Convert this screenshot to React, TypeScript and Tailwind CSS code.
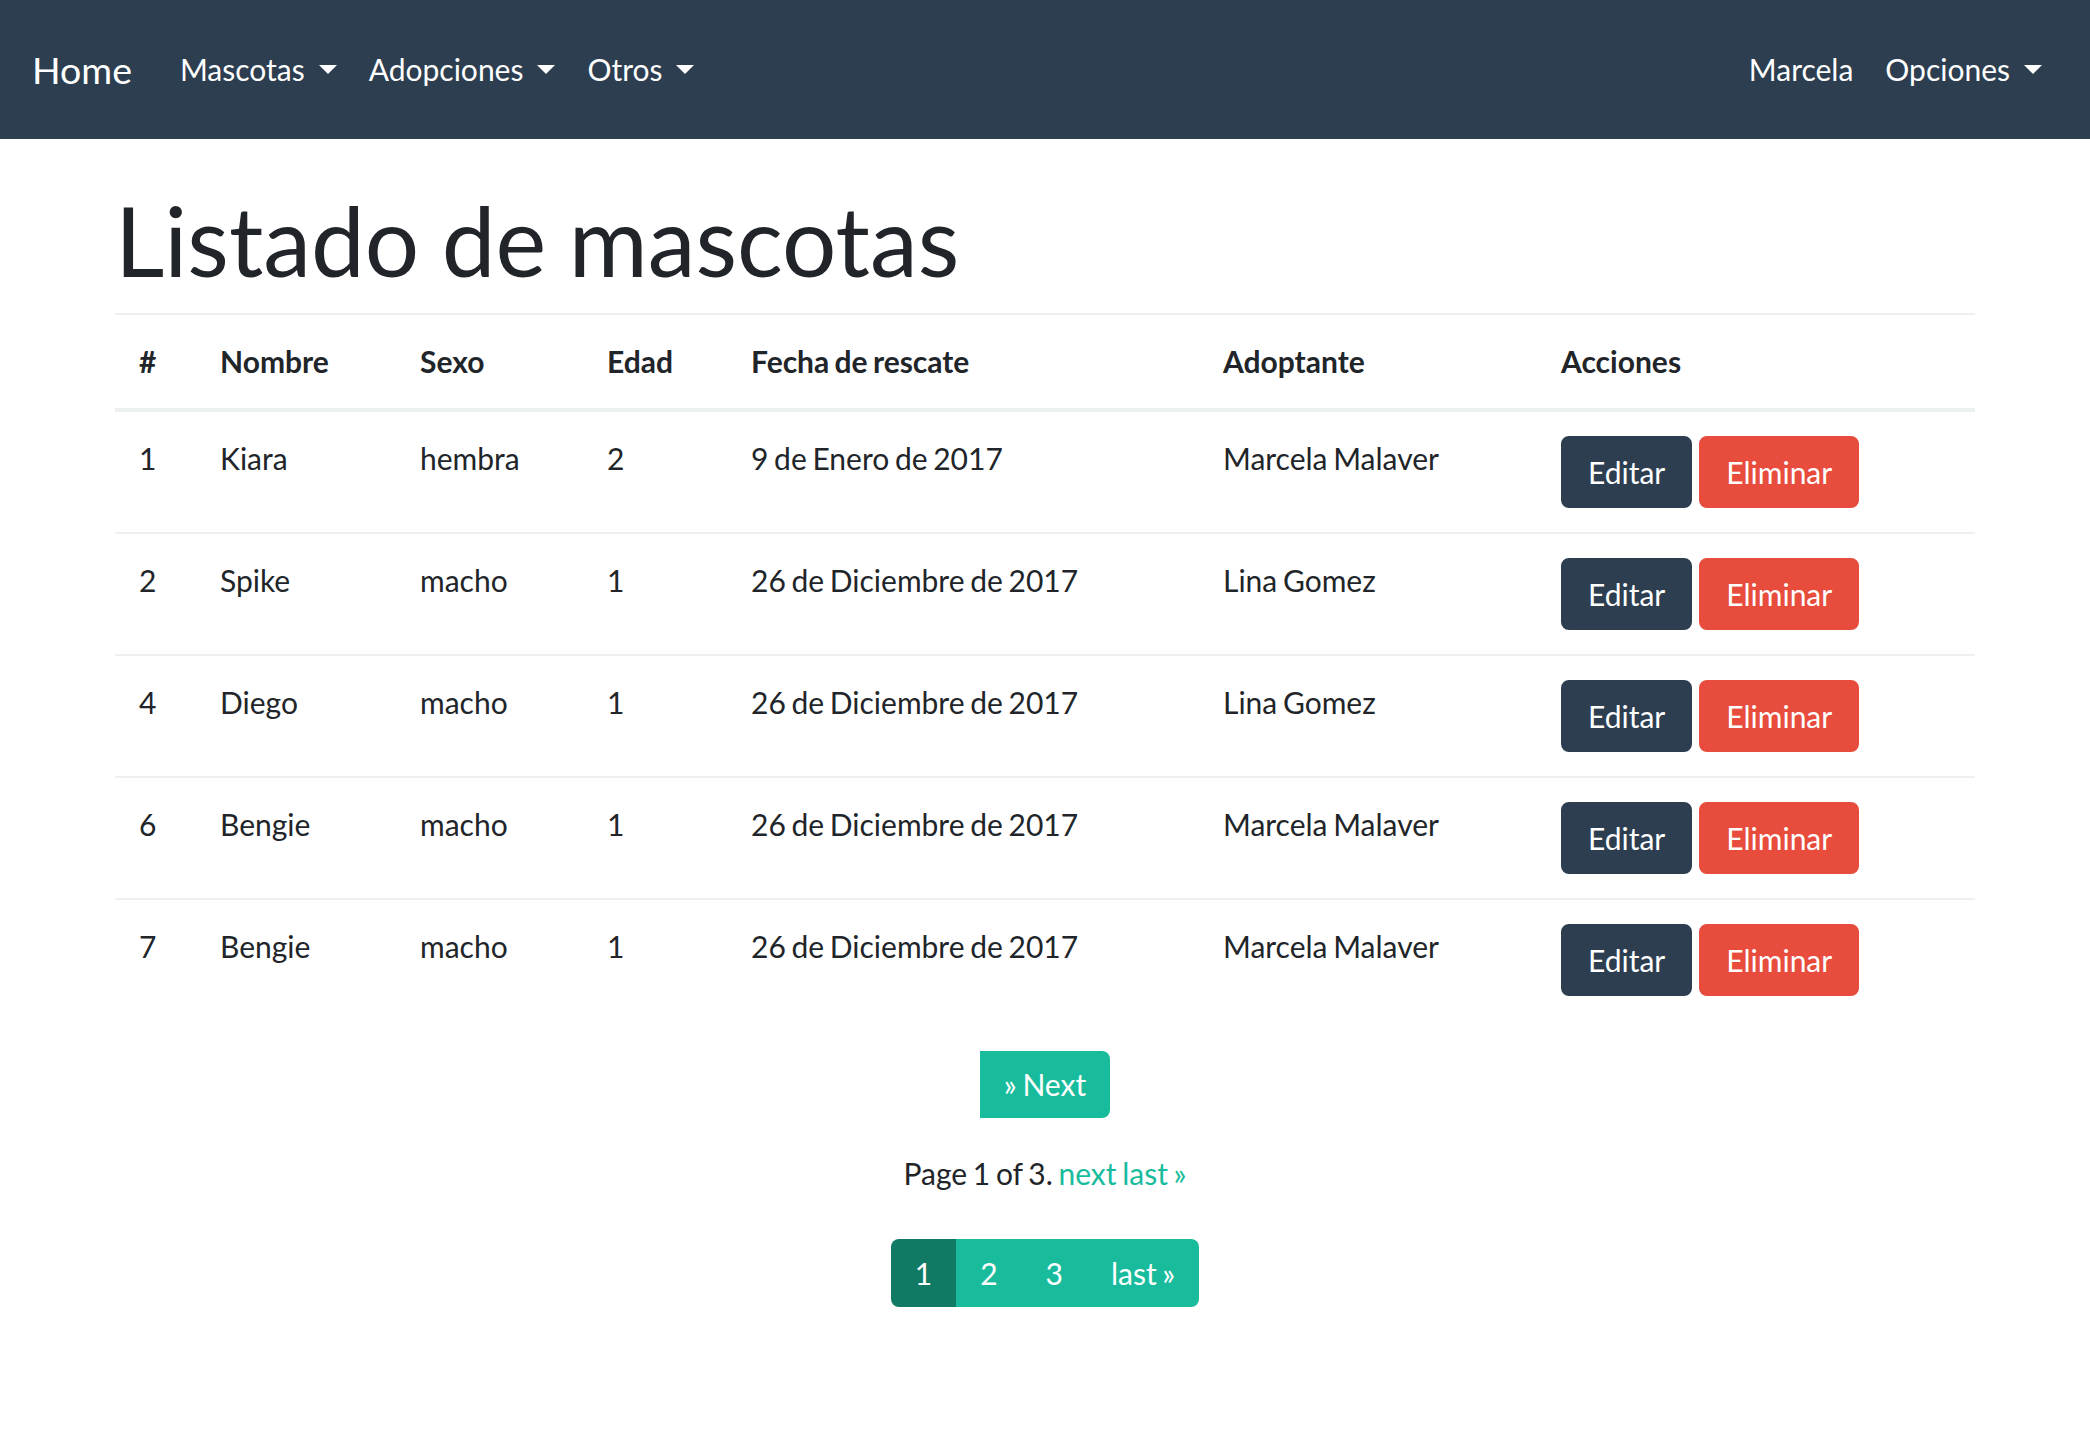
import React from 'react'

// Listado de mascotas — Bootstrap "Flatly"-style page rendered at 2x scale

type Mascota = {
  id: number
  nombre: string
  sexo: string
  edad: number
  fecha: string
  adoptante: string
}

const MASCOTAS: Mascota[] = [
  { id: 1, nombre: 'Kiara', sexo: 'hembra', edad: 2, fecha: '9 de Enero de 2017', adoptante: 'Marcela Malaver' },
  { id: 2, nombre: 'Spike', sexo: 'macho', edad: 1, fecha: '26 de Diciembre de 2017', adoptante: 'Lina Gomez' },
  { id: 4, nombre: 'Diego', sexo: 'macho', edad: 1, fecha: '26 de Diciembre de 2017', adoptante: 'Lina Gomez' },
  { id: 6, nombre: 'Bengie', sexo: 'macho', edad: 1, fecha: '26 de Diciembre de 2017', adoptante: 'Marcela Malaver' },
  { id: 7, nombre: 'Bengie', sexo: 'macho', edad: 1, fecha: '26 de Diciembre de 2017', adoptante: 'Marcela Malaver' },
]

// Bootstrap dropdown caret (border triangle)
function Caret() {
  return (
    <span className="ml-[14px] inline-block h-0 w-0 border-x-[9px] border-t-[9px] border-x-transparent border-t-white align-middle" />
  )
}

function NavLink({ label, dropdown }: { label: string; dropdown?: boolean }) {
  return (
    <a className="flex items-center px-[16px] text-[30px] leading-[45px] text-white">
      {label}
      {dropdown && <Caret />}
    </a>
  )
}

function Navbar() {
  return (
    <nav className="flex h-[139px] items-center bg-[#2c3e50] px-[32px]">
      <a className="mr-[32px] text-[37.5px] leading-[56px] text-white">Home</a>
      <div className="flex items-center">
        <NavLink label="Mascotas" dropdown />
        <NavLink label="Adopciones" dropdown />
        <NavLink label="Otros" dropdown />
      </div>
      <div className="ml-auto flex items-center">
        <NavLink label="Marcela" />
        <NavLink label="Opciones" dropdown />
      </div>
    </nav>
  )
}

const TH = 'border-t-2 border-b-4 border-[#ecf0f1] p-[24px] text-left align-bottom font-bold'
const TD = 'border-t-2 border-[#ecf0f1] p-[24px] align-top'

export default function App() {
  return (
    <div className="min-h-screen bg-white font-['Lato','Liberation_Sans',sans-serif] text-[30px] leading-[45px] text-[#212529]">
      <Navbar />

      <main className="mx-auto w-[1860px] [word-spacing:-2px]">
        <h1 className="mt-[43px] mb-[16px] text-[96px] leading-[1.2] font-normal">
          Listado de mascotas
        </h1>

        <table className="w-full table-fixed border-collapse">
          <thead>
            <tr>
              <th className={`${TH} w-[81px]`}>#</th>
              <th className={`${TH} w-[200px]`}>Nombre</th>
              <th className={`${TH} w-[187px]`}>Sexo</th>
              <th className={`${TH} w-[144px]`}>Edad</th>
              <th className={`${TH} w-[472px]`}>Fecha de rescate</th>
              <th className={`${TH} w-[338px]`}>Adoptante</th>
              <th className={`${TH} w-[438px]`}>Acciones</th>
            </tr>
          </thead>
          <tbody>
            {MASCOTAS.map((m) => (
              <tr key={m.id}>
                <td className={TD}>{m.id}</td>
                <td className={TD}>{m.nombre}</td>
                <td className={TD}>{m.sexo}</td>
                <td className={TD}>{m.edad}</td>
                <td className={TD}>{m.fecha}</td>
                <td className={TD}>{m.adoptante}</td>
                <td className={TD}>
                  <div className="flex gap-[7px]">
                    <a className="rounded-[8px] border-2 border-[#2c3e50] bg-[#2c3e50] px-[25px] py-[11.5px] text-white">
                      Editar
                    </a>
                    <a className="rounded-[8px] border-2 border-[#e74c3c] bg-[#e74c3c] px-[25px] py-[11.5px] text-white">
                      Eliminar
                    </a>
                  </div>
                </td>
              </tr>
            ))}
          </tbody>
        </table>

        {/* ── Pagination ─────────────────────────────────────────────── */}
        <div className="mt-[31px] flex justify-center">
          <a className="rounded-r-[8px] bg-[#18bc9c] px-[24px] py-[15px] leading-[37px] text-white">
            » Next
          </a>
        </div>

        <p className="mt-[33px] text-center">
          Page 1 of 3. <a className="text-[#18bc9c]">next last »</a>
        </p>

        <div className="mt-[43px] flex justify-center">
          <div className="flex overflow-hidden rounded-[8px] leading-[37px] text-white">
            <span className="bg-[#117a65] px-[24px] py-[15.5px]">1</span>
            <a className="bg-[#18bc9c] px-[24px] py-[15.5px]">2</a>
            <a className="bg-[#18bc9c] px-[24px] py-[15.5px]">3</a>
            <a className="bg-[#18bc9c] px-[24px] py-[15.5px]">last »</a>
          </div>
        </div>
      </main>
    </div>
  )
}
